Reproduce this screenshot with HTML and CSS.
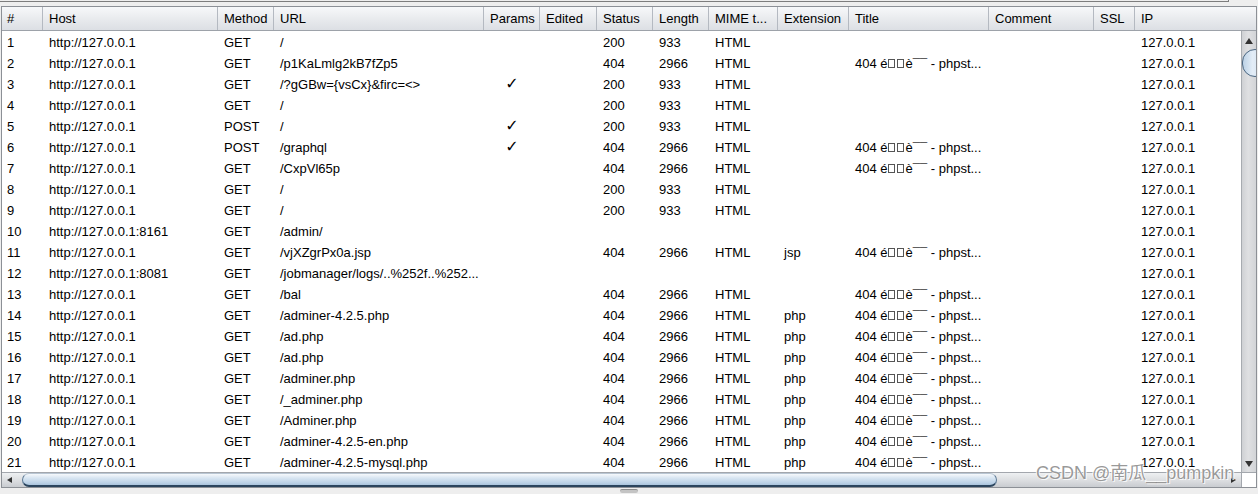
FILE: index.html
```html
<!DOCTYPE html>
<html>
<head>
<meta charset="utf-8">
<link rel="stylesheet" href="styles.css">
</head>
<body>
<div class="topbar"></div>
<div class="pane">
  <div class="head">
    <div class="cols">
      <div class="c">#</div><div class="c">Host</div><div class="c">Method</div><div class="c">URL</div><div class="c">Params</div><div class="c">Edited</div><div class="c">Status</div><div class="c">Length</div><div class="c">MIME t...</div><div class="c">Extension</div><div class="c">Title</div><div class="c">Comment</div><div class="c">SSL</div><div class="c">IP</div>
    </div>
  </div>
  <div class="headcorner"></div>
  <div class="body">
    <div class="cols row"><div class="c">1</div><div class="c">http://127.0.0.1</div><div class="c">GET</div><div class="c">/</div><div class="c chk"></div><div class="c"></div><div class="c">200</div><div class="c">933</div><div class="c">HTML</div><div class="c"></div><div class="c"></div><div class="c"></div><div class="c"></div><div class="c">127.0.0.1</div></div>
    <div class="cols row"><div class="c">2</div><div class="c">http://127.0.0.1</div><div class="c">GET</div><div class="c">/p1KaLmlg2kB7fZp5</div><div class="c chk"></div><div class="c"></div><div class="c">404</div><div class="c">2966</div><div class="c">HTML</div><div class="c"></div><div class="c">404 é<span class="tofu"></span><span class="tofu"></span>è¯¯ - phpst...</div><div class="c"></div><div class="c"></div><div class="c">127.0.0.1</div></div>
    <div class="cols row"><div class="c">3</div><div class="c">http://127.0.0.1</div><div class="c">GET</div><div class="c">/?gGBw={vsCx}&amp;firc=&lt;&gt;</div><div class="c chk">✓</div><div class="c"></div><div class="c">200</div><div class="c">933</div><div class="c">HTML</div><div class="c"></div><div class="c"></div><div class="c"></div><div class="c"></div><div class="c">127.0.0.1</div></div>
    <div class="cols row"><div class="c">4</div><div class="c">http://127.0.0.1</div><div class="c">GET</div><div class="c">/</div><div class="c chk"></div><div class="c"></div><div class="c">200</div><div class="c">933</div><div class="c">HTML</div><div class="c"></div><div class="c"></div><div class="c"></div><div class="c"></div><div class="c">127.0.0.1</div></div>
    <div class="cols row"><div class="c">5</div><div class="c">http://127.0.0.1</div><div class="c">POST</div><div class="c">/</div><div class="c chk">✓</div><div class="c"></div><div class="c">200</div><div class="c">933</div><div class="c">HTML</div><div class="c"></div><div class="c"></div><div class="c"></div><div class="c"></div><div class="c">127.0.0.1</div></div>
    <div class="cols row"><div class="c">6</div><div class="c">http://127.0.0.1</div><div class="c">POST</div><div class="c">/graphql</div><div class="c chk">✓</div><div class="c"></div><div class="c">404</div><div class="c">2966</div><div class="c">HTML</div><div class="c"></div><div class="c">404 é<span class="tofu"></span><span class="tofu"></span>è¯¯ - phpst...</div><div class="c"></div><div class="c"></div><div class="c">127.0.0.1</div></div>
    <div class="cols row"><div class="c">7</div><div class="c">http://127.0.0.1</div><div class="c">GET</div><div class="c">/CxpVl65p</div><div class="c chk"></div><div class="c"></div><div class="c">404</div><div class="c">2966</div><div class="c">HTML</div><div class="c"></div><div class="c">404 é<span class="tofu"></span><span class="tofu"></span>è¯¯ - phpst...</div><div class="c"></div><div class="c"></div><div class="c">127.0.0.1</div></div>
    <div class="cols row"><div class="c">8</div><div class="c">http://127.0.0.1</div><div class="c">GET</div><div class="c">/</div><div class="c chk"></div><div class="c"></div><div class="c">200</div><div class="c">933</div><div class="c">HTML</div><div class="c"></div><div class="c"></div><div class="c"></div><div class="c"></div><div class="c">127.0.0.1</div></div>
    <div class="cols row"><div class="c">9</div><div class="c">http://127.0.0.1</div><div class="c">GET</div><div class="c">/</div><div class="c chk"></div><div class="c"></div><div class="c">200</div><div class="c">933</div><div class="c">HTML</div><div class="c"></div><div class="c"></div><div class="c"></div><div class="c"></div><div class="c">127.0.0.1</div></div>
    <div class="cols row"><div class="c">10</div><div class="c">http://127.0.0.1:8161</div><div class="c">GET</div><div class="c">/admin/</div><div class="c chk"></div><div class="c"></div><div class="c"></div><div class="c"></div><div class="c"></div><div class="c"></div><div class="c"></div><div class="c"></div><div class="c"></div><div class="c">127.0.0.1</div></div>
    <div class="cols row"><div class="c">11</div><div class="c">http://127.0.0.1</div><div class="c">GET</div><div class="c">/vjXZgrPx0a.jsp</div><div class="c chk"></div><div class="c"></div><div class="c">404</div><div class="c">2966</div><div class="c">HTML</div><div class="c">jsp</div><div class="c">404 é<span class="tofu"></span><span class="tofu"></span>è¯¯ - phpst...</div><div class="c"></div><div class="c"></div><div class="c">127.0.0.1</div></div>
    <div class="cols row"><div class="c">12</div><div class="c">http://127.0.0.1:8081</div><div class="c">GET</div><div class="c">/jobmanager/logs/..%252f..%252...</div><div class="c chk"></div><div class="c"></div><div class="c"></div><div class="c"></div><div class="c"></div><div class="c"></div><div class="c"></div><div class="c"></div><div class="c"></div><div class="c">127.0.0.1</div></div>
    <div class="cols row"><div class="c">13</div><div class="c">http://127.0.0.1</div><div class="c">GET</div><div class="c">/bal</div><div class="c chk"></div><div class="c"></div><div class="c">404</div><div class="c">2966</div><div class="c">HTML</div><div class="c"></div><div class="c">404 é<span class="tofu"></span><span class="tofu"></span>è¯¯ - phpst...</div><div class="c"></div><div class="c"></div><div class="c">127.0.0.1</div></div>
    <div class="cols row"><div class="c">14</div><div class="c">http://127.0.0.1</div><div class="c">GET</div><div class="c">/adminer-4.2.5.php</div><div class="c chk"></div><div class="c"></div><div class="c">404</div><div class="c">2966</div><div class="c">HTML</div><div class="c">php</div><div class="c">404 é<span class="tofu"></span><span class="tofu"></span>è¯¯ - phpst...</div><div class="c"></div><div class="c"></div><div class="c">127.0.0.1</div></div>
    <div class="cols row"><div class="c">15</div><div class="c">http://127.0.0.1</div><div class="c">GET</div><div class="c">/ad.php</div><div class="c chk"></div><div class="c"></div><div class="c">404</div><div class="c">2966</div><div class="c">HTML</div><div class="c">php</div><div class="c">404 é<span class="tofu"></span><span class="tofu"></span>è¯¯ - phpst...</div><div class="c"></div><div class="c"></div><div class="c">127.0.0.1</div></div>
    <div class="cols row"><div class="c">16</div><div class="c">http://127.0.0.1</div><div class="c">GET</div><div class="c">/ad.php</div><div class="c chk"></div><div class="c"></div><div class="c">404</div><div class="c">2966</div><div class="c">HTML</div><div class="c">php</div><div class="c">404 é<span class="tofu"></span><span class="tofu"></span>è¯¯ - phpst...</div><div class="c"></div><div class="c"></div><div class="c">127.0.0.1</div></div>
    <div class="cols row"><div class="c">17</div><div class="c">http://127.0.0.1</div><div class="c">GET</div><div class="c">/adminer.php</div><div class="c chk"></div><div class="c"></div><div class="c">404</div><div class="c">2966</div><div class="c">HTML</div><div class="c">php</div><div class="c">404 é<span class="tofu"></span><span class="tofu"></span>è¯¯ - phpst...</div><div class="c"></div><div class="c"></div><div class="c">127.0.0.1</div></div>
    <div class="cols row"><div class="c">18</div><div class="c">http://127.0.0.1</div><div class="c">GET</div><div class="c">/_adminer.php</div><div class="c chk"></div><div class="c"></div><div class="c">404</div><div class="c">2966</div><div class="c">HTML</div><div class="c">php</div><div class="c">404 é<span class="tofu"></span><span class="tofu"></span>è¯¯ - phpst...</div><div class="c"></div><div class="c"></div><div class="c">127.0.0.1</div></div>
    <div class="cols row"><div class="c">19</div><div class="c">http://127.0.0.1</div><div class="c">GET</div><div class="c">/Adminer.php</div><div class="c chk"></div><div class="c"></div><div class="c">404</div><div class="c">2966</div><div class="c">HTML</div><div class="c">php</div><div class="c">404 é<span class="tofu"></span><span class="tofu"></span>è¯¯ - phpst...</div><div class="c"></div><div class="c"></div><div class="c">127.0.0.1</div></div>
    <div class="cols row"><div class="c">20</div><div class="c">http://127.0.0.1</div><div class="c">GET</div><div class="c">/adminer-4.2.5-en.php</div><div class="c chk"></div><div class="c"></div><div class="c">404</div><div class="c">2966</div><div class="c">HTML</div><div class="c">php</div><div class="c">404 é<span class="tofu"></span><span class="tofu"></span>è¯¯ - phpst...</div><div class="c"></div><div class="c"></div><div class="c">127.0.0.1</div></div>
    <div class="cols row"><div class="c">21</div><div class="c">http://127.0.0.1</div><div class="c">GET</div><div class="c">/adminer-4.2.5-mysql.php</div><div class="c chk"></div><div class="c"></div><div class="c">404</div><div class="c">2966</div><div class="c">HTML</div><div class="c">php</div><div class="c">404 é<span class="tofu"></span><span class="tofu"></span>è¯¯ - phpst...</div><div class="c"></div><div class="c"></div><div class="c">127.0.0.1</div></div>
  </div>
  <div class="vscroll">
    <div class="vbtn up"><span class="tri tri-up"></span></div>
    <div class="vtrack"><div class="vthumb"></div></div>
    <div class="vbtn down"><span class="tri tri-down"></span></div>
  </div>
  <div class="hscroll">
    <div class="hbtn left"><span class="tri tri-left"></span></div>
    <div class="htrack"><div class="hthumb"></div></div>
    <div class="hbtn right"><span class="tri tri-right"></span></div>
  </div>
  <div class="corner"></div>
</div>
<div class="divider"><div class="grip"></div></div>
<div class="watermark">CSDN @南瓜__pumpkin</div>
</body>
</html>
```
FILE: styles.css
```css
* { box-sizing: border-box; }
html, body { margin: 0; padding: 0; }
body {
  width: 1258px;
  height: 494px;
  overflow: hidden;
  position: relative;
  background: #eeeeee;
  font-family: "Liberation Sans", Arial, sans-serif;
  font-size: 13px;
  color: #000;
}
.topbar {
  width: 1229px;
  height: 2px;
  border-right: 1px solid #7d7d7d;
  border-bottom: 1px solid #7d7d7d;
}
.pane {
  margin: 4px 0 0 1px;
  width: 1256px;
  border: 1px solid #8c9096;
  background: #fff;
  display: grid;
  grid-template-columns: 1239px 15px;
  grid-template-rows: 24px 441px 15px;
}
.cols {
  display: grid;
  grid-template-columns: 41px 175px 56px 210px 56px 57px 56px 56px 69px 71px 140px 105px 41px 200px;
  width: max-content;
}
.c {
  padding-left: 6px;
  white-space: nowrap;
  overflow: hidden;
}
.c:first-child { padding-left: 5px; }
.head {
  overflow: hidden;
  background: linear-gradient(#f7f8fa, #e9ebee 50%, #dcdfe4);
  border-bottom: 1px solid #9da2a9;
}
.head .c {
  line-height: 23px;
  height: 23px;
  border-right: 1px solid #b4b9c1;
}
.headcorner {
  background: linear-gradient(#f7f8fa, #e9ebee 50%, #dcdfe4);
  border-bottom: 1px solid #9da2a9;
}
.body { overflow: hidden; }
.row .c {
  line-height: 21px;
  height: 21px;
  padding-top: 1px;
}
.row .chk {
  padding-left: 0;
  padding-top: 0;
  text-align: center;
  font-family: "DejaVu Sans", sans-serif;
  font-size: 16px;
  line-height: 22px;
  font-weight: bold;
}
.tofu {
  display: inline-block;
  width: 7px;
  height: 9px;
  border: 1px solid #555;
  margin-right: 2px;
}
.vscroll {
  display: flex;
  flex-direction: column;
  border-left: 1px solid #a7abb0;
  background: linear-gradient(90deg, #cfd1d4, #dfe0e2 45%, #d2d4d7);
}
.vbtn {
  height: 15px;
  display: flex;
  justify-content: center;
  align-items: center;
}
.vbtn.up { padding-top: 5px; }
.vbtn.down { padding-bottom: 1px; }
.vtrack {
  flex: 1;
  overflow: hidden;
}
.vthumb {
  margin-top: 3px;
  width: 26px;
  height: 28px;
  border-radius: 14px;
  border: 1px solid #4b6782;
  background: linear-gradient(90deg, #bcd2e6, #e3edf7 40%, #cbdcec);
}
.hscroll {
  display: flex;
  border-top: 1px solid #a3a7ad;
  background: linear-gradient(#eef0f2, #d9dbde 60%, #c9ccd0);
}
.hbtn {
  width: 14px;
  display: flex;
  justify-content: center;
  align-items: center;
}
.hbtn.right { width: 15px; }
.htrack {
  flex: 1;
  overflow: hidden;
  padding-left: 6px;
}
.hthumb {
  width: 975px;
  height: 14px;
  border-radius: 8px;
  border: 1px solid #5a7894;
  border-top-color: #b9c6d3;
  border-bottom: 2px solid #2b455e;
  background: linear-gradient(#f6f9fc, #d9e6f2 35%, #bcd2e7 80%, #a9c3dc);
}
.corner {
  background: #fff;
  border-top: 1px solid #a3a7ad;
  border-left: 1px solid #a3a7ad;
}
.tri {
  width: 0;
  height: 0;
  display: block;
}
.tri-up {
  border-left: 4px solid transparent;
  border-right: 4px solid transparent;
  border-bottom: 6px solid #333;
}
.tri-down {
  border-left: 4px solid transparent;
  border-right: 4px solid transparent;
  border-top: 6px solid #333;
}
.tri-left {
  border-top: 3px solid transparent;
  border-bottom: 3px solid transparent;
  border-right: 5px solid #333;
}
.tri-right {
  border-top: 3px solid transparent;
  border-bottom: 3px solid transparent;
  border-left: 5px solid #333;
}
.divider {
  display: flex;
  justify-content: center;
  padding-top: 1px;
}
.grip {
  width: 18px;
  height: 4px;
  border-radius: 2px;
  background: #c4c4c4;
  border-top: 1px solid #8d8d8d;
}
.watermark {
  position: absolute;
  left: 1036px;
  top: 462px;
  font-family: "Liberation Sans", "Noto Sans CJK SC", sans-serif;
  font-size: 18px;
  line-height: 22px;
  color: rgba(120, 120, 120, 0.75);
  text-shadow: 0 0 1px #fff, 1px 1px 0 rgba(255, 255, 255, 0.8), -1px -1px 0 rgba(255, 255, 255, 0.8);
  white-space: nowrap;
}
```
